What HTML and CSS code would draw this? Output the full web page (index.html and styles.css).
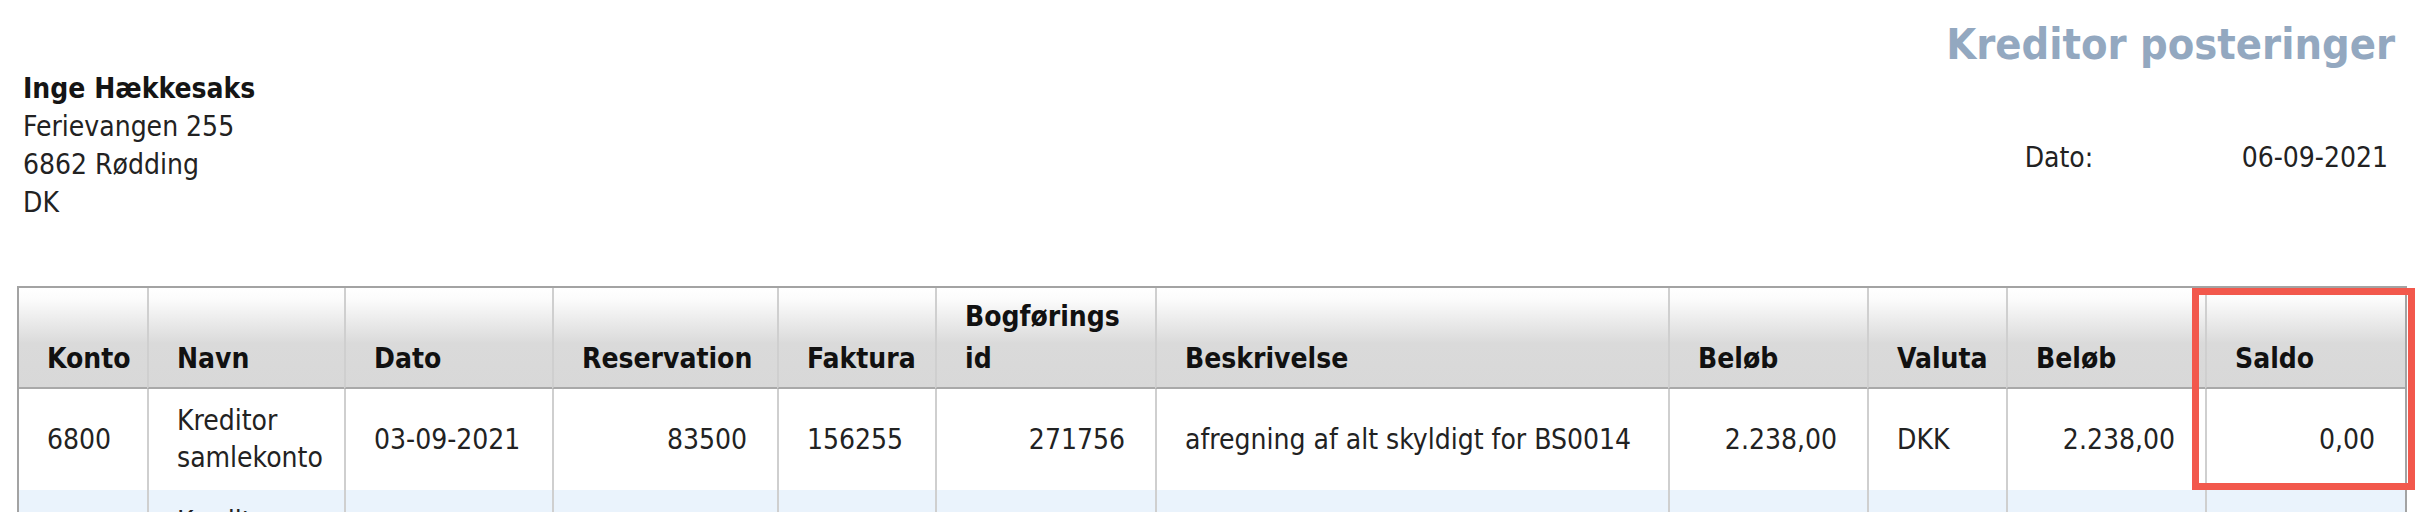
FILE: index.html
```html
<!DOCTYPE html>
<html lang="da">
<head>
<meta charset="utf-8">
<title>Kreditor posteringer</title>
<link rel="stylesheet" href="styles.css">
</head>
<body>
<div class="page">
  <header class="top">
    <div class="address">
      <div class="name">Inge Hækkesaks</div>
      <div>Ferievangen 255</div>
      <div>6862 Rødding</div>
      <div>DK</div>
    </div>
    <div class="right">
      <h1 class="title">Kreditor posteringer</h1>
      <div class="meta">
        <span class="meta-label">Dato:</span>
        <span class="meta-value">06-09-2021</span>
      </div>
    </div>
  </header>

  <div class="table-wrap">
    <table class="ledger">
      <colgroup>
        <col class="c-konto">
        <col class="c-navn">
        <col class="c-dato">
        <col class="c-res">
        <col class="c-fak">
        <col class="c-bog">
        <col class="c-besk">
        <col class="c-belob">
        <col class="c-valuta">
        <col class="c-belob2">
        <col class="c-saldo">
      </colgroup>
      <thead>
        <tr>
          <th>Konto</th>
          <th>Navn</th>
          <th>Dato</th>
          <th>Reservation</th>
          <th>Faktura</th>
          <th>Bogførings id</th>
          <th>Beskrivelse</th>
          <th>Beløb</th>
          <th>Valuta</th>
          <th>Beløb</th>
          <th>Saldo</th>
        </tr>
      </thead>
      <tbody>
        <tr>
          <td>6800</td>
          <td>Kreditor samlekonto</td>
          <td>03-09-2021</td>
          <td class="num">83500</td>
          <td>156255</td>
          <td class="num">271756</td>
          <td>afregning af alt skyldigt for BS0014</td>
          <td class="num">2.238,00</td>
          <td>DKK</td>
          <td class="num">2.238,00</td>
          <td class="num">0,00</td>
        </tr>
        <tr class="alt">
          <td></td>
          <td>Kreditor samlekonto</td>
          <td></td>
          <td class="num"></td>
          <td></td>
          <td class="num"></td>
          <td></td>
          <td class="num"></td>
          <td></td>
          <td class="num"></td>
          <td class="num"></td>
        </tr>
      </tbody>
    </table>
    <div class="highlight"></div>
  </div>
</div>
</body>
</html>
```

FILE: styles.css
```css
html, body {
  margin: 0;
  padding: 0;
  background: #ffffff;
}

body {
  font-family: "DejaVu Sans Condensed", "DejaVu Sans", sans-serif;
  font-size: 28px;
  line-height: 38px;
  color: #222222;
  overflow: hidden;
}

.page {
  padding: 0 27px 0 17px;
}

.top {
  display: flex;
  justify-content: space-between;
  align-items: flex-start;
}

.address {
  margin-left: 6px;
  margin-top: 70px;
}

.name {
  font-weight: bold;
  color: #151515;
}

.right {
  display: flex;
  flex-direction: column;
  align-items: flex-end;
}

.title {
  margin: 18px 12px 0 0;
  font-size: 43px;
  line-height: 52px;
  font-weight: bold;
  color: #93a8c0;
}

.meta {
  display: flex;
  margin: 69px 19px 0 0;
}

.meta-label {
  width: 217px;
}

.table-wrap {
  position: relative;
  margin-top: 64px;
}

.ledger {
  width: 2390px;
  table-layout: fixed;
  border-collapse: separate;
  border-spacing: 0;
  border: 2px solid #a3a3a3;
}

.c-konto { width: 128px; }
.c-navn { width: 197px; }
.c-dato { width: 208px; }
.c-res { width: 225px; }
.c-fak { width: 158px; }
.c-bog { width: 220px; }
.c-besk { width: 513px; }
.c-belob { width: 199px; }
.c-valuta { width: 139px; }
.c-belob2 { width: 199px; }
.c-saldo { width: 200px; }

.ledger th,
.ledger td {
  padding-left: 28px;
  padding-right: 30px;
  border-left: 2px solid #cfcfcf;
  text-align: left;
  white-space: normal;
}

.ledger th:first-child,
.ledger td:first-child {
  border-left: none;
}

.ledger th {
  padding-top: 8px;
  padding-bottom: 7px;
  line-height: 42px;
  vertical-align: bottom;
  font-weight: bold;
  color: #111111;
  border-bottom: 2px solid #a9a9a9;
  background: linear-gradient(to bottom, #ffffff 0%, #fbfbfb 12%, #e6e6e6 40%, #dadada 56%, #d8d8d8 100%);
}

.ledger td {
  padding-top: 13px;
  padding-bottom: 14px;
  line-height: 37px;
  vertical-align: middle;
  color: #222222;
  background: #ffffff;
}

.ledger td.num {
  text-align: right;
}

.ledger tr.alt td {
  background: #eaf3fc;
}

.highlight {
  position: absolute;
  left: 2175px;
  top: 2px;
  width: 223px;
  height: 202px;
  box-sizing: border-box;
  border: 7px solid #f2584c;
  pointer-events: none;
}
```
